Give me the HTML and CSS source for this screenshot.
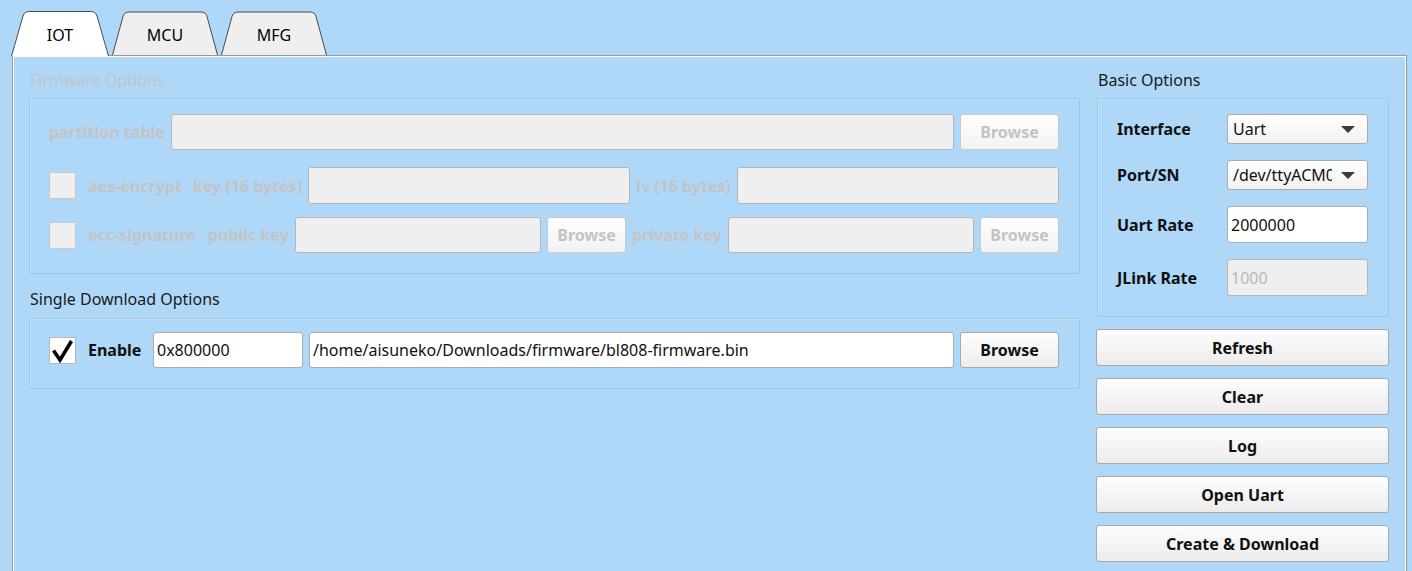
FILE: index.html
```html
<!DOCTYPE html>
<html>
<head>
<meta charset="utf-8">
<link rel="stylesheet" href="styles.css">
</head>
<body>
<div class="window">
  <div class="tabbar">
    <div class="tab tab-active tab-iot">
      <svg class="tab-shape" viewBox="0 0 98 45" preserveAspectRatio="none"><path d="M0.5,45 L12,5 Q13.3,0.5 18,0.5 L80,0.5 Q84.7,0.5 86,5 L97.5,45" fill="#ffffff" stroke="#4a4a4a" stroke-width="1"/></svg>
      <span class="tab-label">IOT</span>
    </div>
    <div class="tab tab-mcu">
      <svg class="tab-shape" viewBox="0 0 106 44" preserveAspectRatio="none"><path d="M0.5,44 L11,5.5 Q12.3,1 17,1 L89,1 Q93.7,1 95,5.5 L105.5,44" fill="#efefef" stroke="#4a4a4a" stroke-width="1"/></svg>
      <span class="tab-label">MCU</span>
    </div>
    <div class="tab tab-mfg">
      <svg class="tab-shape" viewBox="0 0 106 44" preserveAspectRatio="none"><path d="M0.5,44 L11,5.5 Q12.3,1 17,1 L89,1 Q93.7,1 95,5.5 L105.5,44" fill="#efefef" stroke="#4a4a4a" stroke-width="1"/></svg>
      <span class="tab-label">MFG</span>
    </div>
  </div>

  <div class="pane">
    <div class="col-left">
      <div class="group-title disabled">Firmware Options</div>
      <div class="group group-fw">
        <div class="row row-pt">
          <span class="lbl disabled-b">partition table</span>
          <div class="input input-disabled grow"></div>
          <div class="btn btn-disabled btn-browse-l">Browse</div>
        </div>
        <div class="row row-aes">
          <div class="check check-disabled"></div>
          <span class="lbl disabled-b lbl-after-check">aes-encrypt</span>
          <span class="lbl disabled-b lbl-key">key (16 bytes)</span>
          <div class="input input-disabled grow"></div>
          <span class="lbl disabled-b">iv (16 bytes)</span>
          <div class="input input-disabled grow"></div>
        </div>
        <div class="row row-ecc">
          <div class="check check-disabled"></div>
          <span class="lbl disabled-b lbl-after-check">ecc-signature</span>
          <span class="lbl disabled-b lbl-pub">public key</span>
          <div class="input input-disabled grow"></div>
          <div class="btn btn-disabled btn-browse-s">Browse</div>
          <span class="lbl disabled-b">private key</span>
          <div class="input input-disabled grow"></div>
          <div class="btn btn-disabled btn-browse-s">Browse</div>
        </div>
      </div>

      <div class="group-title group-title-2">Single Download Options</div>
      <div class="group group-single">
        <div class="row row-single">
          <div class="check check-on">
            <svg viewBox="0 0 27 27" width="27" height="27"><path d="M4.5,13.5 L11,23 L22.5,4" fill="none" stroke="#000" stroke-width="3.6" stroke-linejoin="miter" stroke-linecap="butt"/></svg>
          </div>
          <span class="lbl lbl-bold lbl-after-check lbl-enable">Enable</span>
          <div class="input input-addr">0x800000</div>
          <div class="input grow">/home/aisuneko/Downloads/firmware/bl808-firmware.bin</div>
          <div class="btn btn-browse-l">Browse</div>
        </div>
      </div>
    </div>

    <div class="col-right">
      <div class="group-title group-title-basic">Basic Options</div>
      <div class="group group-basic">
        <div class="basic-row basic-row-combo">
          <span class="lbl lbl-bold">Interface</span>
          <div class="combo"><span class="combo-text">Uart</span><span class="arrow"></span></div>
        </div>
        <div class="basic-row basic-row-combo">
          <span class="lbl lbl-bold">Port/SN</span>
          <div class="combo"><span class="combo-text">/dev/ttyACM0</span><span class="arrow"></span></div>
        </div>
        <div class="basic-row basic-row-input">
          <span class="lbl lbl-bold">Uart Rate</span>
          <div class="input input-basic">2000000</div>
        </div>
        <div class="basic-row basic-row-input">
          <span class="lbl lbl-bold">JLink Rate</span>
          <div class="input input-basic input-disabled input-disabled-text">1000</div>
        </div>
      </div>
      <div class="actions">
        <div class="btn btn-action">Refresh</div>
        <div class="btn btn-action">Clear</div>
        <div class="btn btn-action">Log</div>
        <div class="btn btn-action">Open Uart</div>
        <div class="btn btn-action">Create &amp; Download</div>
      </div>
    </div>
  </div>
</div>
</body>
</html>
```

FILE: styles.css
```css
html, body {
  margin: 0;
  padding: 0;
}
body {
  background: #afd8f8;
  font-family: "Noto Sans", "Open Sans", sans-serif;
  font-size: 16px;
  color: #111;
  width: 1412px;
  height: 571px;
  overflow: hidden;
}
.window {
  padding: 11px 0 0 11px;
}

/* Tabs */
.tabbar {
  display: flex;
  align-items: flex-start;
  gap: 3px;
  height: 44px;
  position: relative;
  z-index: 2;
}
.tab {
  position: relative;
  height: 44px;
  display: flex;
  align-items: center;
  justify-content: center;
  flex: none;
}
.tab-iot { width: 98px; height: 45px; }
.tab-mcu { width: 106px; }
.tab-mfg { width: 106px; }
.tab-shape {
  position: absolute;
  left: 0;
  top: 0;
  width: 100%;
  height: 100%;
  overflow: visible;
}
.tab-label {
  position: relative;
  font-size: 16px;
  color: #000;
  padding-top: 4px;
}
.tab-iot .tab-label { padding-top: 2px; }

/* Pane */
.pane {
  margin-left: 1px;
  width: 1395px;
  height: 540px;
  border: 1px solid #9a9a9a;
  box-shadow: inset 1px 1px 0 #ffffff, inset -1px 0 0 #ffffff;
  background: #afd8f8;
  display: flex;
  gap: 16px;
  padding: 12px 17px 0 16px;
  box-sizing: border-box;
  position: relative;
  z-index: 1;
}
.col-left {
  width: 1051px;
  flex: none;
  display: flex;
  flex-direction: column;
}
.col-right {
  width: 293px;
  flex: none;
  display: flex;
  flex-direction: column;
}

.group-title {
  height: 24px;
  line-height: 24px;
  padding-left: 1px;
  margin-bottom: 6px;
  color: #1a1a1a;
}
.group-title.disabled { color: #c3c3c3; }
.group-title-2 {
  margin-top: 13px;
  margin-bottom: 7px;
}
.group-title-basic {
  padding-left: 2px;
}

.group {
  border: 1px solid #9ec6e4;
  border-radius: 2px;
  box-shadow: inset 1px 1px 0 rgba(255,255,255,0.25);
  box-sizing: border-box;
}
.group-fw {
  height: 176px;
  padding: 15px 20px 0 19px;
}
.group-single {
  height: 71px;
  padding: 13px 20px 0 19px;
}
.group-basic {
  margin-left: 1px;
  height: 219px;
  padding: 15px 20px 0 19px;
}

.row {
  display: flex;
  align-items: center;
}
.row-pt { height: 36px; gap: 6px; }
.row-aes { height: 37px; margin-top: 17px; gap: 6px; }
.row-ecc { height: 36px; margin-top: 13px; gap: 6px; }
.row-single { height: 36px; gap: 6px; }

.lbl { white-space: nowrap; font-weight: bold; }
.disabled-b { color: #c3c3c3; }
.lbl-bold { color: #111; }
.lbl-after-check { margin-left: 6px; }
.lbl-key { margin-left: 5px; }
.lbl-pub { margin-left: 6px; }
.lbl-enable { width: 59px; flex: none; }

.grow { flex: 1 1 0; min-width: 0; }

.input {
  height: 100%;
  box-sizing: border-box;
  background: #ffffff;
  border: 1px solid #ababab;
  border-radius: 3px;
  padding: 0 3px;
  display: flex;
  align-items: center;
  white-space: nowrap;
  overflow: hidden;
  color: #111;
}
.input-disabled {
  background: #efefef;
  border-color: #b5b5b5;
}
.input-disabled-text { color: #b8b8b8; }
.input-addr { width: 150px; flex: none; }

.check {
  width: 27px;
  height: 27px;
  box-sizing: border-box;
  border: 1px solid #b8b8b8;
  background: #ffffff;
  flex: none;
}
.check-disabled { background: #efefef; border-color: #c8c8c8; }
.check svg { display: block; margin: -1px; }

.btn {
  box-sizing: border-box;
  height: 100%;
  border: 1px solid #a9a9a9;
  border-radius: 3px;
  background: linear-gradient(#fdfdfd, #ececec);
  display: flex;
  align-items: center;
  justify-content: center;
  font-weight: bold;
  color: #111;
  white-space: nowrap;
  flex: none;
}
.btn-disabled {
  color: #c3c3c3;
  border-color: #c9c9c9;
  background: linear-gradient(#ffffff, #f2f2f2);
}
.btn-browse-l { width: 99px; }
.btn-browse-s { width: 79px; }

/* Basic options */
.basic-row {
  display: flex;
  align-items: center;
}
.basic-row .lbl { width: 110px; flex: none; }
.basic-row-combo { height: 30px; margin-bottom: 16px; }
.basic-row-input { height: 37px; margin-bottom: 16px; }
.combo {
  width: 141px;
  height: 30px;
  box-sizing: border-box;
  border: 1px solid #ababab;
  border-radius: 3px;
  background: linear-gradient(#ffffff, #f1f1f1);
  display: flex;
  align-items: center;
  padding-left: 5px;
  position: relative;
  flex: none;
}
.combo-text {
  width: 99px;
  overflow: hidden;
  white-space: nowrap;
  color: #111;
}
.arrow {
  position: absolute;
  right: 12px;
  top: 11px;
  width: 0;
  height: 0;
  border-left: 7.5px solid transparent;
  border-right: 7.5px solid transparent;
  border-top: 7.5px solid #3c3c3c;
}
.input-basic { width: 141px; flex: none; }

.actions {
  margin-top: 12px;
  display: flex;
  flex-direction: column;
  gap: 12px;
}
.btn-action {
  height: 37px;
  width: 293px;
}
```
